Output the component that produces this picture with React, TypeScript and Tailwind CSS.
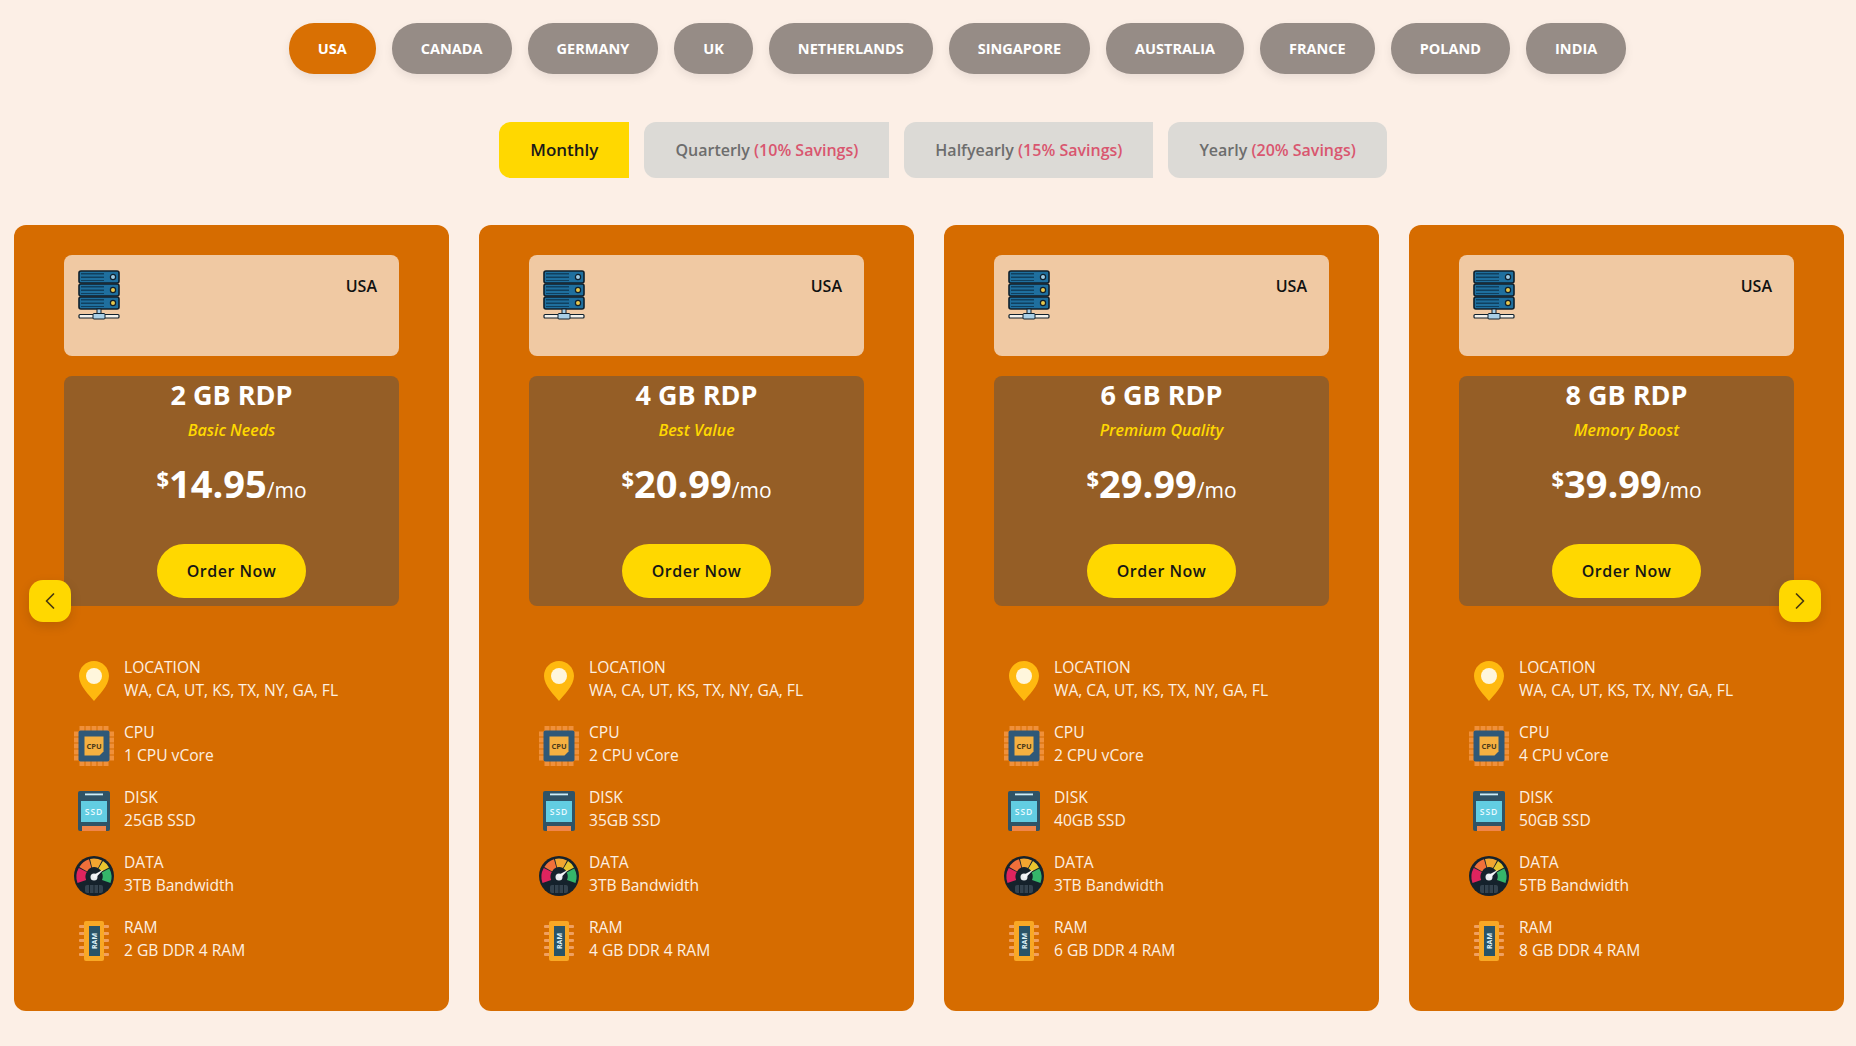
import { ChevronLeft, ChevronRight } from 'lucide-react';
import type { ReactNode } from 'react';

const countries = ['USA', 'CANADA', 'GERMANY', 'UK', 'NETHERLANDS', 'SINGAPORE', 'AUSTRALIA', 'FRANCE', 'POLAND', 'INDIA'];

const terms = [
  { name: 'Quarterly', savings: '(10% Savings)', shape: 'rounded-l-[12px]' },
  { name: 'Halfyearly', savings: '(15% Savings)', shape: 'rounded-l-[12px]' },
  { name: 'Yearly', savings: '(20% Savings)', shape: 'rounded-[12px]' },
];

const plans = [
  { title: '2 GB RDP', tag: 'Basic Needs', price: '14.95', cpu: '1 CPU vCore', disk: '25GB SSD', data: '3TB Bandwidth', ram: '2 GB DDR 4 RAM' },
  { title: '4 GB RDP', tag: 'Best Value', price: '20.99', cpu: '2 CPU vCore', disk: '35GB SSD', data: '3TB Bandwidth', ram: '4 GB DDR 4 RAM' },
  { title: '6 GB RDP', tag: 'Premium Quality', price: '29.99', cpu: '2 CPU vCore', disk: '40GB SSD', data: '3TB Bandwidth', ram: '6 GB DDR 4 RAM' },
  { title: '8 GB RDP', tag: 'Memory Boost', price: '39.99', cpu: '4 CPU vCore', disk: '50GB SSD', data: '5TB Bandwidth', ram: '8 GB DDR 4 RAM' },
];

function ServerIcon() {
  return (
    <svg width="42" height="50" viewBox="0 0 42 50">
      {[0, 13, 26].map((y, i) => (
        <g key={y}>
          <rect x="1" y={y + 1} width="40" height="12" rx="2" fill="#1f6f9e" stroke="#10202c" strokeWidth="1.6" />
          <rect x="3" y={y + 3} width="23" height="1.5" fill="#10405f" />
          <rect x="3" y={y + 6.5} width="23" height="1.5" fill="#10405f" />
          <rect x="3" y={y + 10} width="23" height="1" fill="#10405f" />
          <circle cx="35" cy={y + 7} r="2.6" fill={i === 0 ? '#9fcbe4' : '#e9c84c'} stroke="#10202c" strokeWidth="1.2" />
        </g>
      ))}
      <rect x="19" y="39" width="4" height="5" fill="#a9cfe6" stroke="#10202c" strokeWidth="1" />
      <rect x="1" y="44.5" width="40" height="3.5" rx="1" fill="#f4f1ea" stroke="#10202c" strokeWidth="1.2" />
      <rect x="15" y="43.5" width="12" height="5.5" rx="1" fill="#a9cfe6" stroke="#10202c" strokeWidth="1" />
    </svg>
  );
}

function PinIcon() {
  return (
    <svg width="30" height="40" viewBox="0 0 30 40">
      <path d="M15 0C6.7 0 0 6.700 0 15c0 9.500 10.500 19.500 15 25 4.500-5.500 15-15.500 15-25C30 6.700 23.300 0 15 0z" fill="#ffb90f" />
      <circle cx="15" cy="15" r="8" fill="#fff6dc" />
    </svg>
  );
}

function CpuIcon() {
  const pins = [5.500, 11.500, 17.500, 23.500, 29.500];
  return (
    <svg width="40" height="40" viewBox="0 0 40 40">
      {pins.map((p) => (
        <g key={p} fill="#f0903a">
          <rect x={p} y="0" width="5" height="5" />
          <rect x={p} y="35" width="5" height="5" />
          <rect x="0" y={p} width="5" height="5" />
          <rect x="35" y={p} width="5" height="5" />
        </g>
      ))}
      <rect x="4.500" y="4.500" width="31" height="31" rx="2" fill="#2f5878" />
      <path d="M10.500 10.500h19v15l-4 4h-15z" fill="#f5b041" />
      <text x="20" y="23" textAnchor="middle" fontSize="7.500" fontWeight="700" fill="#4a3a1a" fontFamily="'Open Sans', sans-serif">CPU</text>
    </svg>
  );
}

function SsdIcon() {
  return (
    <svg width="32" height="40" viewBox="0 0 32 40">
      <rect x="0" y="0" width="32" height="40" rx="2" fill="#2f5366" />
      <rect x="7" y="2.500" width="18" height="1.800" fill="#cdeef7" />
      <rect x="3" y="10" width="26" height="21" fill="#62cde2" />
      <text x="16" y="24" textAnchor="middle" fontSize="8.500" fontWeight="600" letterSpacing="1" fill="#eafaff" fontFamily="'Open Sans', sans-serif">SSD</text>
      <rect x="4" y="35" width="24" height="5" fill="#f0854a" />
    </svg>
  );
}

function GaugeIcon() {
  return (
    <svg width="40" height="40" viewBox="0 0 40 40">
      <circle cx="20" cy="20" r="20" fill="#15222c" />
      <path d="M3.500 27A17.500 17.500 0 0 1 4.800 12l8 4a8.500 8.500 0 0 0-.600 8z" fill="#e0245e" />
      <path d="M5.300 11A17.500 17.500 0 0 1 15 3.200l2.300 8.200a8.500 8.500 0 0 0-4.200 4z" fill="#f0703a" />
      <path d="M16 3a17.500 17.500 0 0 1 12 1.600l-4 7.500a8.500 8.500 0 0 0-6-.800z" fill="#f2a530" />
      <path d="M29 5a17.500 17.500 0 0 1 6 6.500l-7.500 4a8.500 8.500 0 0 0-3-3z" fill="#e8c52e" />
      <path d="M35.300 12.500a17.500 17.500 0 0 1 1.200 14.500l-8.500-3a8.500 8.500 0 0 0-.300-7.500z" fill="#35b56a" />
      <circle cx="20" cy="21" r="8" fill="#15222c" />
      <circle cx="20" cy="21" r="3.500" fill="#e6ebee" />
      <path d="M18.500 19.500l11-6-8.500 9z" fill="#f4f6f8" />
      <rect x="11" y="29" width="18" height="8" rx="2" fill="#34434f" />
      <path d="M15.500 29v8M20 29v8M24.500 29v8" stroke="#15222c" strokeWidth="1" />
    </svg>
  );
}

function RamIcon() {
  const pins = [6, 13, 20, 27, 34];
  return (
    <svg width="30" height="40" viewBox="0 0 30 40">
      {pins.map((p) => (
        <g key={p} fill="#f0a060">
          <rect x="0" y={p - 2} width="6" height="3" rx="1" />
          <rect x="24" y={p - 2} width="6" height="3" rx="1" />
        </g>
      ))}
      <rect x="5" y="0" width="20" height="40" rx="2" fill="#f9a825" />
      <rect x="10" y="5" width="11" height="30" fill="#2a5468" />
      <text x="0" y="0" transform="translate(18 20) rotate(-90)" textAnchor="middle" fontSize="7" fontWeight="700" fill="#dff2f7" fontFamily="'Open Sans', sans-serif">RAM</text>
    </svg>
  );
}

function Feature({ icon, label, value }: { icon: ReactNode; label: string; value: string }) {
  return (
    <li className="flex items-center">
      <div className="flex h-[46px] w-10 items-center justify-center pt-1">{icon}</div>
      <div className="ml-2.5 text-[15.6px] leading-[23px] text-[#fdf0e2]">
        <div>{label}</div>
        <div>{value}</div>
      </div>
    </li>
  );
}

export default function App() {
  return (
    <div className="min-h-[1046px] overflow-hidden bg-[#fcefe6] font-['Open_Sans',sans-serif]">
      {/* Country pills */}
      <div className="flex justify-center gap-4 pt-[23px] pl-[59px]">
        {countries.map((country, index) => (
          <button
            key={country}
            className={`h-[51px] rounded-[25px] px-[29px] text-[14.5px] font-bold text-white shadow-[0_4px_10px_rgba(0,0,0,0.08)] ${
              index === 0 ? 'bg-[#d97003]' : 'bg-[#968c86]'
            }`}
          >
            {country}
          </button>
        ))}
      </div>

      {/* Billing terms */}
      <div className="mt-12 flex justify-center gap-[15px] pl-[30px]">
        <button className="h-14 rounded-l-[12px] bg-[#ffd800] px-[31px] text-[17px] font-semibold text-[#1a1a1a]">
          Monthly
        </button>
        {terms.map((term) => (
          <button
            key={term.name}
            className={`h-14 bg-[#dcdad6] px-[31px] text-base font-semibold text-[#6d6d6d] ${term.shape}`}
          >
            {term.name} <span className="text-[#d9566f]">{term.savings}</span>
          </button>
        ))}
      </div>

      {/* Plan cards */}
      <div className="relative mt-[47px] mr-3 ml-3.5 grid grid-cols-4 gap-[30px]">
        {plans.map((plan) => (
          <div key={plan.title} className="h-[786px] rounded-[12px] bg-[#d66c00] px-[50px] pt-[30px]">
            <div className="flex h-[101px] items-start justify-between rounded-[8px] bg-[#f0c9a3] pt-[15px] pr-[22px] pl-3.5">
              <ServerIcon />
              <span className="text-base leading-[32px] font-semibold text-[#111]">USA</span>
            </div>

            <div className="mt-5 flex h-[230px] flex-col items-center rounded-[8px] bg-[#955e26] text-center text-white">
              <h3 className="text-[27px] leading-[38px] font-bold">{plan.title}</h3>
              <p className="mt-1 text-base leading-[24px] font-semibold text-[#ffd800] italic">{plan.tag}</p>
              <div className="mt-4 flex items-baseline">
                <span className="relative -top-[11px] text-[22px] leading-none font-bold">$</span>
                <span className="text-[38px] leading-[50px] font-bold">{plan.price}</span>
                <span className="text-[21px] font-normal">/mo</span>
              </div>
              <button className="mt-auto mb-2 h-[54px] w-[149px] rounded-[27px] bg-[#ffd800] text-base font-semibold tracking-[0.5px] text-[#161616]">
                Order Now
              </button>
            </div>

            <ul className="mt-[50px] flex flex-col gap-[19px] pl-2.5">
              <Feature icon={<PinIcon />} label="LOCATION" value="WA, CA, UT, KS, TX, NY, GA, FL" />
              <Feature icon={<CpuIcon />} label="CPU" value={plan.cpu} />
              <Feature icon={<SsdIcon />} label="DISK" value={plan.disk} />
              <Feature icon={<GaugeIcon />} label="DATA" value={plan.data} />
              <Feature icon={<RamIcon />} label="RAM" value={plan.ram} />
            </ul>
          </div>
        ))}

        <button className="absolute top-[355px] left-[15px] flex size-[42px] items-center justify-center rounded-[14px] bg-[#ffd800] text-[#4a3a10] shadow-[0_4px_12px_rgba(0,0,0,0.12)]">
          <ChevronLeft size={28} strokeWidth={1.5} />
        </button>
        <button className="absolute top-[355px] right-[23px] flex size-[42px] items-center justify-center rounded-[14px] bg-[#ffd800] text-[#4a3a10] shadow-[0_4px_12px_rgba(0,0,0,0.12)]">
          <ChevronRight size={28} strokeWidth={1.5} />
        </button>
      </div>
    </div>
  );
}
